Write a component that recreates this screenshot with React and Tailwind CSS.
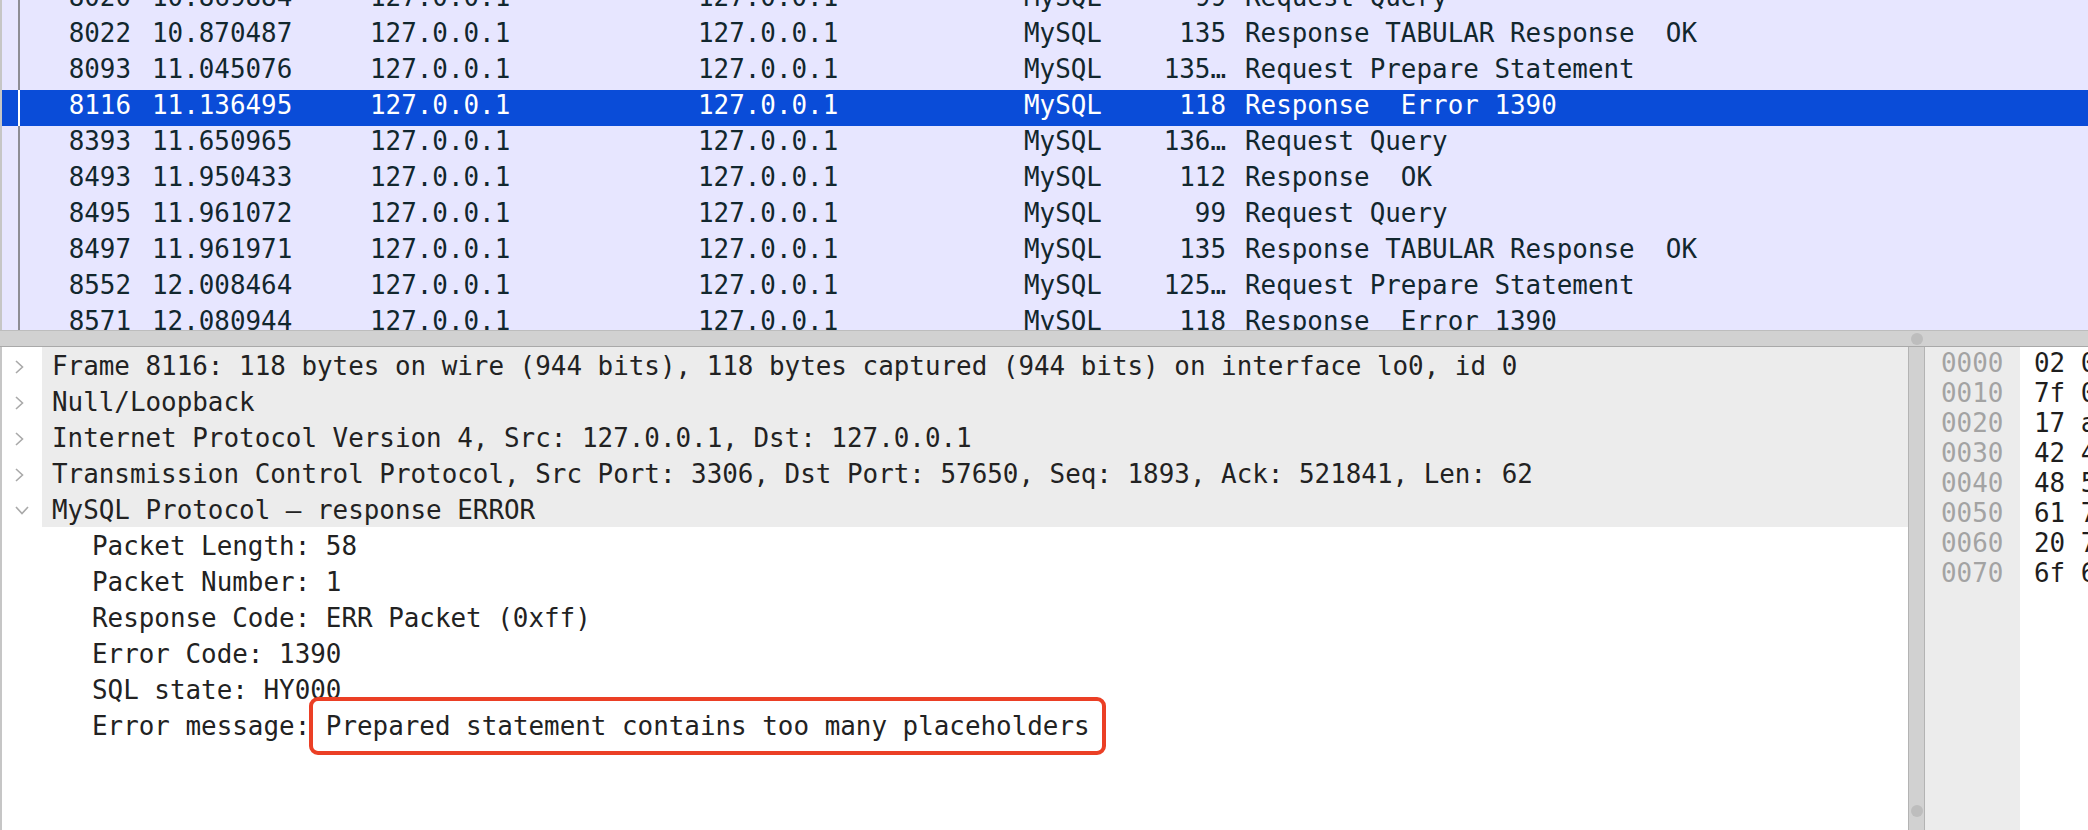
const packets = [
  { no: '8020', time: '10.869884', len: '99', info: 'Request Query' },
  { no: '8022', time: '10.870487', len: '135', info: 'Response TABULAR Response  OK' },
  { no: '8093', time: '11.045076', len: '135…', info: 'Request Prepare Statement' },
  { no: '8116', time: '11.136495', len: '118', info: 'Response  Error 1390', selected: true },
  { no: '8393', time: '11.650965', len: '136…', info: 'Request Query' },
  { no: '8493', time: '11.950433', len: '112', info: 'Response  OK' },
  { no: '8495', time: '11.961072', len: '99', info: 'Request Query' },
  { no: '8497', time: '11.961971', len: '135', info: 'Response TABULAR Response  OK' },
  { no: '8552', time: '12.008464', len: '125…', info: 'Request Prepare Statement' },
  { no: '8571', time: '12.080944', len: '118', info: 'Response  Error 1390' },
]

const tree = [
  'Frame 8116: 118 bytes on wire (944 bits), 118 bytes captured (944 bits) on interface lo0, id 0',
  'Null/Loopback',
  'Internet Protocol Version 4, Src: 127.0.0.1, Dst: 127.0.0.1',
  'Transmission Control Protocol, Src Port: 3306, Dst Port: 57650, Seq: 1893, Ack: 521841, Len: 62',
]

const fields = [
  'Packet Length: 58',
  'Packet Number: 1',
  'Response Code: ERR Packet (0xff)',
  'Error Code: 1390',
  'SQL state: HY000',
]

const hex = [
  ['0000', '02 00 00 00 45 00 00 72 00 00 40 00 40 06 00 00'],
  ['0010', '7f 00 00 01 7f 00 00 01 0c ea e1 32 2e 9e 1b 1c'],
  ['0020', '17 a5 42 6f 80 18 18 e3 fe 66 00 00 01 01 08 0a'],
  ['0030', '42 4c 1d 9a 42 4c 1d 9a 3a 00 00 01 ff 6e 05 23'],
  ['0040', '48 59 30 30 30 50 72 65 70 61 72 65 64 20 73 74'],
  ['0050', '61 74 65 6d 65 6e 74 20 63 6f 6e 74 61 69 6e 73'],
  ['0060', '20 74 6f 6f 20 6d 61 6e 79 20 70 6c 61 63 65 68'],
  ['0070', '6f 6c 64 65 72 73'],
]

const Chevron = ({ open }) =>
  open ? (
    <svg width="14" height="9" viewBox="0 0 14 9" className="mt-[2px]">
      <polyline points="1,1 7,7.5 13,1" fill="none" stroke="#a9a9a9" strokeWidth="1.6" />
    </svg>
  ) : (
    <svg width="9" height="14" viewBox="0 0 9 14" className="mt-[3px]">
      <polyline points="1,1 7.5,7 1,13" fill="none" stroke="#a9a9a9" strokeWidth="1.6" />
    </svg>
  )

const PacketRow = ({ p, first }) => (
  <div
    className={
      p.selected
        ? 'flex h-[36px] leading-[30px] whitespace-pre bg-[#0a4cd8] text-white'
        : 'flex h-[36px] leading-[30px] whitespace-pre text-[#12272e]'
    }
    style={first ? { marginTop: -18 } : undefined}
  >
    <div className="w-[16px] shrink-0" />
    <div className={p.selected ? 'w-[2px] shrink-0 bg-white' : 'w-[2px] shrink-0 bg-[#8d8d95]'} />
    <div className="w-[111px] shrink-0 text-right">{p.no}</div>
    <div className="w-[239px] shrink-0 pl-[21px]">{p.time}</div>
    <div className="w-[328px] shrink-0">127.0.0.1</div>
    <div className="w-[326px] shrink-0">127.0.0.1</div>
    <div className="w-[76px] shrink-0">MySQL</div>
    <div className="w-[126px] shrink-0 text-right">{p.len}</div>
    <div className="flex-1 pl-[19px]">{p.info}</div>
  </div>
)

const App = () => {
  return (
    <div className="w-[2088px] h-[830px] overflow-hidden flex flex-col bg-white font-['DejaVu_Sans_Mono',monospace] text-[25.9px]">
      {/* packet list */}
      <div className="h-[330px] shrink-0 overflow-hidden bg-[#e7e6ff] border-l-2 border-[#c6c6c6]">
        {packets.map((p, i) => (
          <PacketRow key={p.no} p={p} first={i === 0} />
        ))}
      </div>

      {/* horizontal splitter */}
      <div className="h-[17px] shrink-0 flex items-center pl-[1911px] bg-[#d1d1d1] border-t border-b border-t-[#bdbdbd] border-b-[#a9a9a9]">
        <div className="w-[12px] h-[12px] rounded-full bg-[#bdbdbd]" />
      </div>

      <div className="flex flex-1 min-h-0">
        {/* details tree */}
        <div className="w-[1908px] shrink-0 overflow-hidden border-l-2 border-[#c6c6c6] text-[#222222] whitespace-pre">
          {tree.map((t) => (
            <div key={t} className="flex h-[36px] leading-[38px]">
              <div className="w-[40px] shrink-0 flex items-center pl-[13px]">
                <Chevron />
              </div>
              <div className="flex-1 bg-[#ececec] pl-[10px]">{t}</div>
            </div>
          ))}
          <div className="flex h-[36px] leading-[38px]">
            <div className="w-[40px] shrink-0 flex items-center pl-[13px]">
              <Chevron open />
            </div>
            <div className="flex-1 bg-[#ececec] pl-[10px]">MySQL Protocol – response ERROR</div>
          </div>
          {fields.map((f) => (
            <div key={f} className="h-[36px] leading-[38px] pl-[90px]">
              {f}
            </div>
          ))}
          <div className="h-[36px] leading-[38px] pl-[90px]">
            Error message:{' '}
            <span className="relative">
              Prepared statement contains too many placeholders
              <span className="absolute -left-[17px] -right-[16px] -top-[14px] -bottom-[14px] border-4 border-[#eb3f25] rounded-[9px]" />
            </span>
          </div>
        </div>

        {/* vertical splitter */}
        <div className="w-[17px] shrink-0 flex flex-col justify-end items-center pb-[13px] bg-[#d1d1d1] border-l border-r border-[#b3b3b3]">
          <div className="w-[12px] h-[12px] rounded-full bg-[#bdbdbd]" />
        </div>

        {/* bytes pane */}
        <div className="flex-1 flex overflow-hidden whitespace-pre">
          <div className="w-[95px] shrink-0 bg-[#ececec] pl-[16px] text-[#a3a3a3]">
            {hex.map(([off]) => (
              <div key={off} className="h-[30px] leading-[32px]">{off}</div>
            ))}
          </div>
          <div className="flex-1 pl-[14px] text-[#1e1e1e]">
            {hex.map(([off, bytes]) => (
              <div key={off} className="h-[30px] leading-[32px]">{bytes}</div>
            ))}
          </div>
        </div>
      </div>
    </div>
  )
}

export default App
